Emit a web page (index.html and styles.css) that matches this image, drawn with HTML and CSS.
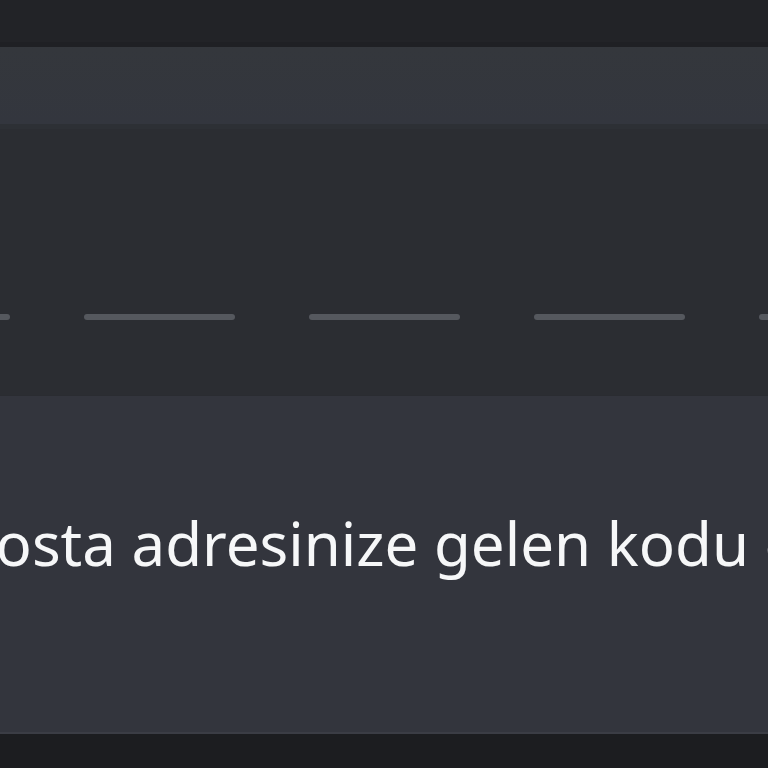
FILE: index.html
```html
<!DOCTYPE html>
<html lang="tr">
<head>
  <meta charset="UTF-8" />
  <title>Kodu Doğrula</title>
  <meta name="viewport" content="width=device-width, initial-scale=1.0"/>
  <link rel="stylesheet" href="styles.css">
</head>
<body>
  <div class="topbar"></div>
  <div class="header"></div>

  <div class="code-area">
    <div class="code-slots">
      <span class="slot"></span>
      <span class="slot"></span>
      <span class="slot"></span>
      <span class="slot"></span>
      <span class="slot"></span>
    </div>
  </div>

  <div class="content">
    <p class="hint">E-posta adresinize gelen kodu girin</p>
  </div>

  <div class="footer"></div>
</body>
</html>
```
FILE: styles.css
```css
html, body {
  margin: 0;
  height: 100%;
}

body {
  font-family: 'Noto Sans', 'Open Sans', sans-serif;
  background: #1c1d20;
  display: flex;
  flex-direction: column;
  overflow: hidden;
}

.topbar {
  height: 42px;
  background: #222327;
  border-bottom: 5px solid #1f2024;
  flex-shrink: 0;
}

.header {
  height: 77px;
  background: linear-gradient(#34373c, #33363e);
  flex-shrink: 0;
}

.code-area {
  height: 266px;
  background: #2b2d32;
  border-top: 5px solid #2d3035;
  overflow: hidden;
  flex-shrink: 0;
}

.code-slots {
  display: flex;
  gap: 74px;
  margin-left: -141px;
  padding-top: 185px;
}

.slot {
  flex-shrink: 0;
  width: 151px;
  height: 6px;
  border-radius: 3px;
  background: #55585e;
}

.content {
  height: 336px;
  background: #33353d;
  border-top: 1px solid #2a2c31;
  overflow: hidden;
  flex-shrink: 0;
}

.hint {
  margin: 106px 0 0 -94px;
  font-size: 60px;
  line-height: 82px;
  color: #f6f7f8;
  white-space: nowrap;
}

.footer {
  flex: 1;
  background: #1c1d20;
  border-top: 2px solid #3b3d45;
}
```
